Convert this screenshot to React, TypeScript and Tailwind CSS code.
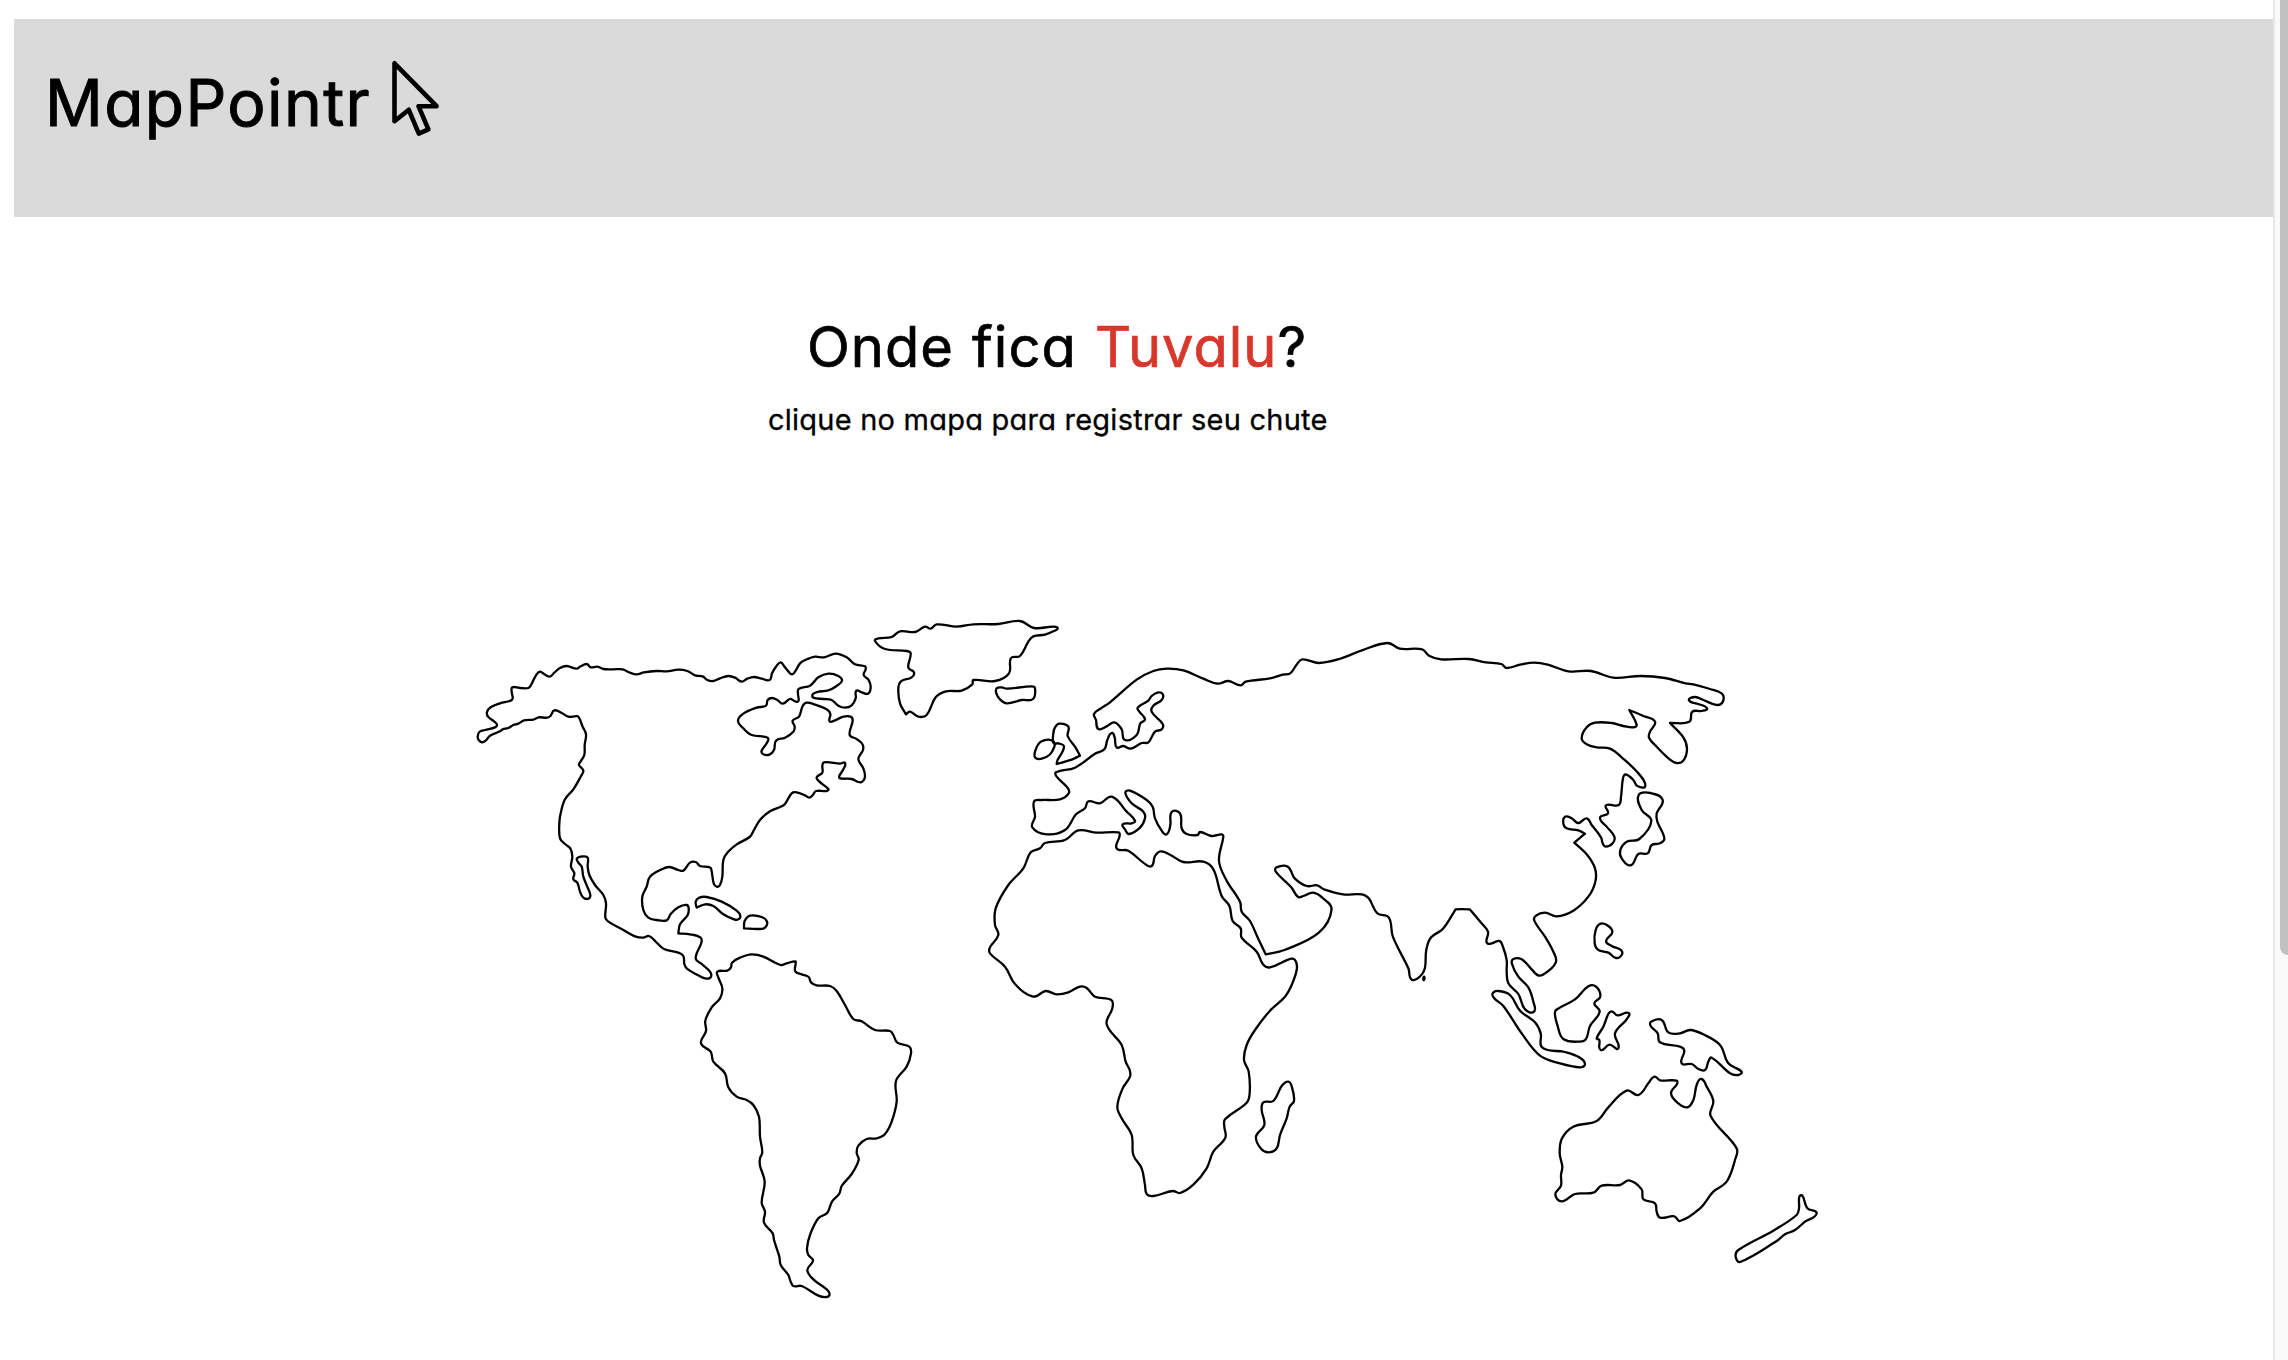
type Point = [number, number];

/** Turns a list of "x,y" pairs drawn on an enlarged sheet into map coordinates. */
const at = (ox: number, oy: number, pairs: string, sx = 3): Point[] =>
  pairs.trim().split(/\s+/).map((pair) => {
    const [x, y] = pair.split(",").map(Number);
    return [ox + x / sx, oy + y / 3];
  });

const americas = (p: string) => at(460, 600, p);
const south = (p: string) => at(640, 900, p);
const north = (p: string) => at(840, 600, p);
const europe = (p: string) => at(970, 640, p);
const africa = (p: string) => at(980, 840, p);
const asia = (p: string) => at(1200, 620, p, 2.9037);
const farEast = (p: string) => at(1460, 650, p);
const oceania = (p: string) => at(1480, 900, p);

/** Closed smooth outline through every point; a doubled point makes a corner. */
function outline(pts: Point[]): string {
  const n = pts.length;
  const dirs = pts.map((_, i) => {
    const a = pts[(i - 1 + n) % n];
    const b = pts[(i + 1) % n];
    const dx = b[0] - a[0];
    const dy = b[1] - a[1];
    const len = Math.hypot(dx, dy) || 1;
    return [dx / len, dy / len];
  });
  let d = `M${pts[0][0].toFixed(2)} ${pts[0][1].toFixed(2)}`;
  for (let i = 0; i < n; i++) {
    const j = (i + 1) % n;
    const p = pts[i];
    const q = pts[j];
    const h = Math.hypot(q[0] - p[0], q[1] - p[1]) * 0.36;
    d += `C${[p[0] + dirs[i][0] * h, p[1] + dirs[i][1] * h, q[0] - dirs[j][0] * h, q[1] - dirs[j][1] * h, q[0], q[1]]
      .map((v) => v.toFixed(2))
      .join(" ")}`;
  }
  return d + "Z";
}

const lands: Point[][] = [
  // North America
  americas(`53,410 58,396 75,390 105,382 111,374 102,364 84,350 81,336 92,322 120,310 152,302 158,295 155,275 157,262 180,264 205,264 213,255 228,226 240,215 252,222 269,230 283,218 300,204 320,198 350,206 362,199 380,192 392,202 412,200 430,207 460,208 488,208 510,218 530,223 552,217 590,213 620,214 655,209 682,213 705,226 728,229 742,240 760,243 780,235 805,228 825,233 845,245 862,236 882,231 905,236 929,240 936,220 950,197 962,187 972,198 985,214 997,223 1008,210 1020,190 1040,178 1065,170 1092,172 1127,161 1160,172 1185,193 1215,199 1217,208 1211,225 1226,240 1232,262 1224,281 1205,277 1189,272 1187,295 1175,316 1155,323 1135,317 1115,300 1090,297 1060,293 1058,283 1072,276 1105,271 1130,258 1146,242 1135,228 1105,221 1075,232 1050,257 1016,267 1014,282 1015,304 1003,303 990,297 968,311 952,300 936,294 923,300 918,317 890,323 850,341 834,362 850,385 875,405 923,413 922,427 905,452 910,463 928,464 942,450 948,422 975,413 1000,395 1004,380 998,362 1017,350 1028,318 1040,308 1065,314 1100,328 1111,342 1109,364 1125,361 1150,350 1172,350 1178,362 1169,405 1188,416 1207,432 1209,450 1195,477 1210,505 1215,530 1207,545 1195,546 1175,537 1140,535 1138,528 1150,508 1155,489 1140,491 1092,487 1087,498 1087,518 1070,532 1078,545 1105,567 1100,573 1068,573 1060,583 1048,593 1035,586 1010,577 995,580 975,612 965,619 930,634 900,660 882,690 869,711 830,733 803,757 790,780 787,830 780,855 770,860 761,850 753,805 745,801 720,798 707,786 690,788 670,812 655,810 628,801 605,808 570,830 560,860 547,890 550,930 565,953 590,960 620,961 632,942 655,922 680,915 686,925 683,945 660,973 655,1000 655,1000 690,1003 722,1013 724,1028 707,1075 725,1092 750,1115 753,1130 740,1136 720,1129 680,1105 673,1092 670,1068 655,1058 612,1047 590,1028 567,1008 550,1013 525,1009 490,990 445,965 436,953 438,910 430,885 405,855 388,825 383,800 383,773 370,769 351,775 355,788 365,800 370,830 383,863 391,885 385,896 370,893 360,875 352,848 340,838 343,820 333,800 337,770 331,745 315,732 300,715 298,670 302,640 315,598 340,568 362,530 370,512 357,495 362,484 373,465 374,435 378,403 368,380 355,350 345,349 325,350 305,339 283,331 272,347 262,353 236,352 220,359 192,361 175,371 160,375 145,384 128,388 120,394 90,407 77,422 66,427 56,420`),
  // Cuba
  americas(`710,923 710,923 707,905 718,893 740,891 785,905 830,932 841,948 835,958 822,958 790,943 760,918 735,913`),
  // Hispaniola
  americas(`852,985 852,985 854,963 870,947 905,951 921,965 915,983 895,987 852,985`),
  // South America
  south(`232,215 262,212 273,202 276,188 300,173 335,163 370,170 421,195 440,190 466,184 467,190 466,214 485,223 506,231 513,247 530,256 570,258 590,273 615,315 640,357 665,364 705,390 750,393 760,405 772,428 808,440 813,460 800,500 768,543 770,605 755,665 735,702 710,715 680,717 655,737 650,758 656,780 635,822 605,858 598,881 576,905 562,938 535,955 510,1005 501,1045 505,1065 519,1082 502,1110 520,1138 560,1168 569,1182 560,1191 535,1187 485,1158 460,1158 452,1145 445,1125 422,1095 418,1070 402,1020 398,1000 372,968 375,935 365,908 374,845 360,797 360,775 367,757 360,710 357,650 340,615 320,600 290,590 265,562 255,520 220,485 212,455 183,430 198,393 196,362 215,322 240,295 247,265 235,232`),
  // Greenland
  north(`105,123 115,115 155,111 180,94 225,96 255,80 272,86 290,73 350,80 400,73 475,72 540,63 582,84 640,80 653,85 640,94 615,104 580,109 565,125 540,168 513,174 507,220 465,243 400,240 397,253 365,272 318,274 287,292 260,345 235,350 210,335 198,343 198,343 180,310 175,265 183,244 215,232 222,217 205,203 212,160 200,153 135,147`),
  // Iceland
  north(`470,265 485,262 500,266 575,259 585,265 579,297 545,300 500,310 480,298 469,280`),
  // Great Britain
  north(`641,430 640,400 645,382 658,371 685,380 683,408 705,440 720,467 720,467 695,479 650,492 650,492 652,482 672,440 655,430`),
  // Ireland
  north(`605,424 642,426 636,455 620,470 590,476 585,455`),
  // Africa
  [
    ...europe(`182,637 210,625 225,609 285,600 325,571 380,578 445,577 449,587 440,625 475,632 520,668 544,679 555,648 572,634 600,644 640,666 700,665 730,688 755,768 778,797 788,843 812,865 815,893`),
    ...africa(`830,335 850,374 870,382 935,356 948,365 950,390 935,435 915,470 870,512 825,570 800,615 792,660 806,695 809,760 800,788 735,838 733,860 736,893 700,935 680,985 640,1034 600,1059 578,1053 520,1068 500,1062 495,1035 485,985 460,945 455,885 425,835 412,800 428,745 450,710 449,690 437,665 425,615 380,553 397,505 394,480 345,470 320,444 300,440 265,457 230,463 197,453 160,470 105,432 75,380 30,340 30,322 55,285 45,255 47,205 85,135 130,85`),
  ],
  // Madagascar
  africa(`850,787 880,783 905,738 925,725 936,742 942,783 929,800 920,835 900,885 890,925 865,937 842,925 828,890 853,855 845,810`),
  // Europe and Asia
  [
    ...europe(`258,397 315,383 375,341 403,328 412,300 425,279 434,292 440,322 460,318 482,326 515,309 535,307 555,275 575,268 578,252 545,215 550,197 575,180 578,162 562,158 545,168 535,182 503,203 508,215 525,238 511,250 500,285 465,300 455,268 433,247 410,259 385,267 378,240 372,222 390,207 420,187 500,119 550,93 590,86 640,91 700,116 743,131 775,123 812,136 827,125 900,115`),
    ...asia(`240,164 262,160 280,135 297,118 345,129 405,117 470,91 545,69 580,86 645,88 665,107 700,118 780,117 830,127 875,132 890,144 930,134 970,128 1010,134 1070,154 1135,153 1200,173 1280,168 1350,174 1410,190`),
    ...farEast(`700,103 750,117 785,130 791,145 783,162 765,164 730,150 705,141 687,151 715,162 741,175 725,183 697,185 688,215 630,219 630,219 670,262 681,297 670,332 650,339 630,329 590,290 567,263 570,245 585,215 550,198 508,180 508,180 530,225 520,232 490,228 455,219 405,218 380,232 365,265 380,283 410,292 450,296 485,322 535,370 556,408 532,408 520,390 497,373 489,385 483,440 476,465 438,466 444,490 420,503 440,530 463,560 458,580 437,590 428,580 423,562 395,525 380,505 355,519 335,505 315,500 310,520 320,535 355,541 375,551 375,551 343,578 343,578 380,613 405,655 406,695 385,740 340,782 290,799 255,788 228,797 223,812 255,860 280,905 288,935 265,963 237,977 215,958 185,928 160,927 156,942`),
    ...oceania(`115,230 145,262 160,305 162,335 135,328 115,282 85,250 80,215 80,180 68,138 58,123 22,130 24,95`),
    ...asia(`815,907 785,870 783,868 742,868 740,872 705,927 670,953 657,990 653,1045 640,1068 615,1079 605,1045 560,950 548,892 515,880 490,835 470,823 415,823 360,808 340,796 310,798 275,775 255,740 222,742 220,755 265,802 285,831 300,828 328,818 355,833 382,868 345,938 245,990`),
    ...europe(`887,943 887,943 862,890 840,843 815,815 810,785 770,722 747,663 760,590 755,583 725,588 690,576 683,585 650,582 635,565 630,520 605,516 601,555 590,583 575,572 555,535 548,500 530,480 480,452 466,458 485,490 520,515 525,535 510,563 477,582 465,568 458,553 485,550 495,542 470,515 425,470 390,490 355,484 345,505 318,523 285,570 230,583 187,562 195,530 192,485 215,480 270,478 297,458 290,440 260,410`),
  ],
  // Sri Lanka
  asia(`649,1080 650,1070 652,1076`),
  // Japan
  farEast(`536,435 572,429 608,450 590,490 592,515 613,565 600,580 575,585 563,610 535,612 512,646 485,625 481,600 500,575 538,567 574,513 545,480`),
  // Philippines
  oceania(`347,90 362,71 385,78 397,97 378,123 395,138 423,150 425,165 408,174 385,158 355,150 344,130`),
  // Sumatra and Java
  oceania(`38,280 55,273 90,285 120,332 165,367 182,400 187,443 255,456 300,473 315,493 300,502 240,490 180,467 125,400 70,318 42,294`),
  // Borneo
  oceania(`228,330 285,298 325,259 348,260 361,290 343,310 359,335 330,378 318,417 300,425 250,417 232,375 225,345`),
  // Sulawesi
  oceania(`395,334 412,346 446,339 440,358 405,400 415,445 388,434 362,450 358,420 350,415 370,380 385,342`),
  // New Guinea
  oceania(`513,365 545,360 565,397 600,400 630,390 670,403 720,435 745,490 785,515 775,525 750,520 695,473 685,485 675,510 655,507 635,492 605,490 613,452 600,440 540,427 533,400 512,378`),
  // Australia
  oceania(`523,530 540,541 590,542 591,552 573,580 595,610 622,622 640,600 650,555 664,537 680,560 700,603 692,648 770,745 765,780 740,845 700,875 660,925 600,963 583,949 540,953 530,935 525,910 490,898 485,868 447,841 420,855 365,857 340,878 285,882 245,904 226,883 243,857 243,825 247,800 239,760 246,715 280,680 350,663 385,622 440,572 475,585 505,550`),
  // New Zealand
  oceania(`958,890 967,887 982,925 1010,940 975,965 945,990 915,1003 890,1023 780,1086 767,1070 775,1050 880,992 950,945 957,925`),
];

function WorldMap() {
  return (
    <svg
      className="mt-[162px] ml-[446px] h-[720px] w-[1400px] shrink-0 cursor-crosshair"
      viewBox="460 600 1400 720"
      fill="none"
      stroke="#000"
      strokeWidth="2.3"
      strokeLinejoin="round"
    >
      {lands.map((pts, i) => (
        <path key={i} d={outline(pts)} />
      ))}
    </svg>
  );
}

function CursorIcon() {
  return (
    <svg
      className="h-[80px] w-[52px]"
      viewBox="390 58 52 80"
      fill="none"
      stroke="#000"
      strokeWidth="4.6"
      strokeLinejoin="round"
    >
      <path d="M394.5 63.3V121.3L408.8 109.8L418.8 133.6L428.4 129.4L418.5 106.2H436.6Z" />
    </svg>
  );
}

export default function App() {
  return (
    <div className="flex h-[1360px] w-[2288px] overflow-hidden bg-white font-['Inter','Noto_Sans',sans-serif] text-black [font-feature-settings:'cv11'_1,'ss03'_1]">
      <main className="flex w-[2273px] shrink-0 flex-col pt-[19px] pl-[14px]">
        <header className="flex h-[198px] shrink-0 items-start bg-[#dadada] pt-[39px] pl-[31px]">
          <h1 className="mt-[7px] w-[345px] text-[64px] leading-[76px] tracking-[1.4px] whitespace-nowrap [-webkit-text-stroke:1px_currentColor]">MapPointr</h1>
          <CursorIcon />
        </header>
        <h2 className="mt-[96px] ml-[793px] text-[56px] leading-[68px] tracking-[1px] [word-spacing:1.5px] whitespace-nowrap [-webkit-text-stroke:0.7px_currentColor]">
          Onde fica <span className="text-[#d8372b]">Tuvalu</span>?
        </h2>
        <p className="mt-[21px] ml-[754px] text-[29px] leading-[36px] tracking-[0.23px] whitespace-nowrap [-webkit-text-stroke:0.3px_currentColor]">
          clique no mapa para registrar seu chute
        </p>
        <WorldMap />
      </main>
      <aside className="flex w-[15px] shrink-0 justify-end border-l-2 border-[#e7e7e7] bg-[#f9f9f9]">
        <div className="h-[955px] w-[8px] rounded-bl-[8px] bg-[#c1c1c1]" />
      </aside>
    </div>
  );
}
